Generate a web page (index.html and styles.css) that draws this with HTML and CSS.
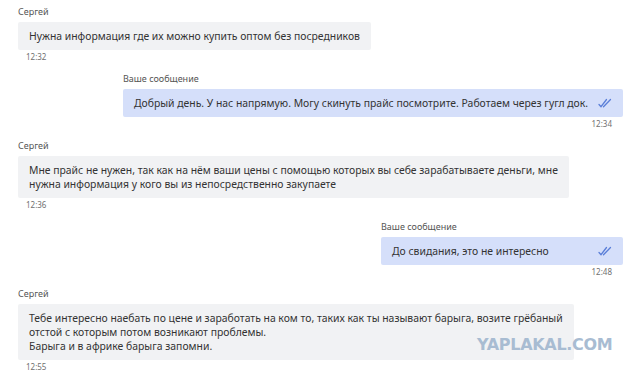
FILE: index.html
```html
<!DOCTYPE html>
<html lang="ru">

<head>
    <meta charset="UTF-8">
    <meta name="viewport" content="width=device-width, initial-scale=1.0">
    <title>Сообщения</title>
    <link rel="stylesheet" href="styles.css">
</head>

<body>
    <div class="chat">
        <div class="msg in">
            <div class="name">Сергей</div>
            <div class="bubble">Нужна информация где их можно купить оптом без посредников</div>
            <div class="time">12:32</div>
        </div>

        <div class="msg out">
            <div class="name">Ваше сообщение</div>
            <div class="bubble">
                <span>Добрый день. У нас напрямую. Могу скинуть прайс посмотрите. Работаем через гугл док.</span>
                <svg class="check" viewBox="0 0 14 10"><path d="M1 6.5l2 2.2L8.5 1.5M5.5 8.7L12.5 1.5"/></svg>
            </div>
            <div class="time">12:34</div>
        </div>

        <div class="msg in">
            <div class="name">Сергей</div>
            <div class="bubble">Мне прайс не нужен, так как на нём ваши цены с помощью которых вы себе зарабатываете деньги, мне<br>нужна информация у кого вы из непосредственно закупаете</div>
            <div class="time">12:36</div>
        </div>

        <div class="msg out">
            <div class="name">Ваше сообщение</div>
            <div class="bubble">
                <span>До свидания, это не интересно</span>
                <svg class="check" viewBox="0 0 14 10"><path d="M1 6.5l2 2.2L8.5 1.5M5.5 8.7L12.5 1.5"/></svg>
            </div>
            <div class="time">12:48</div>
        </div>

        <div class="msg in">
            <div class="name">Сергей</div>
            <div class="bubble">Тебе интересно наебать по цене и заработать на ком то, таких как ты называют барыга, возите грёбаный<br>отстой с которым потом возникают проблемы.<br>Барыга и в африке барыга запомни.</div>
            <div class="time">12:55</div>
        </div>
    </div>

    <div class="watermark">YAPLAKAL.COM</div>
</body>

</html>
```

FILE: styles.css
```css
* {
    box-sizing: border-box;
}

body {
    margin: 0;
    padding: 6px 17px 0 18px;
    background-color: #FFFFFF;
    font-family: 'Noto Sans', 'Open Sans', sans-serif;
    color: #333333;
    overflow: hidden;
}

.chat {
    display: flex;
    flex-direction: column;
}

.msg {
    display: flex;
    flex-direction: column;
    width: fit-content;
    margin-bottom: 11px;
}

.msg.out {
    margin-left: auto;
}

.name {
    font-size: 9px;
    line-height: 12px;
    color: #555555;
    margin-bottom: 4px;
}

.bubble {
    font-size: 10.4px;
    line-height: 14px;
    padding: 7px 11px;
    border-radius: 2px;
    white-space: nowrap;
}

.in .bubble {
    background-color: #F1F2F4;
}

.out .bubble {
    background-color: #D5DFFA;
    display: flex;
    align-items: center;
    min-width: 242px;
}

.out .bubble span {
    margin-right: 10px;
}

.check {
    width: 14px;
    height: 10px;
    margin-left: auto;
    fill: none;
    stroke: #5B7FD8;
    stroke-width: 1.3;
    stroke-linecap: round;
}

.time {
    font-size: 8px;
    line-height: 10px;
    color: #707070;
    margin-top: 2px;
}

.in .time {
    padding-left: 8px;
}

.out .time {
    align-self: flex-end;
    padding-right: 11px;
}

.watermark {
    position: absolute;
    left: 477px;
    top: 335px;
    font-family: 'DejaVu Sans', sans-serif;
    font-weight: 900;
    font-size: 16px;
    color: #A8BCD2;
    letter-spacing: -0.3px;
}
```
